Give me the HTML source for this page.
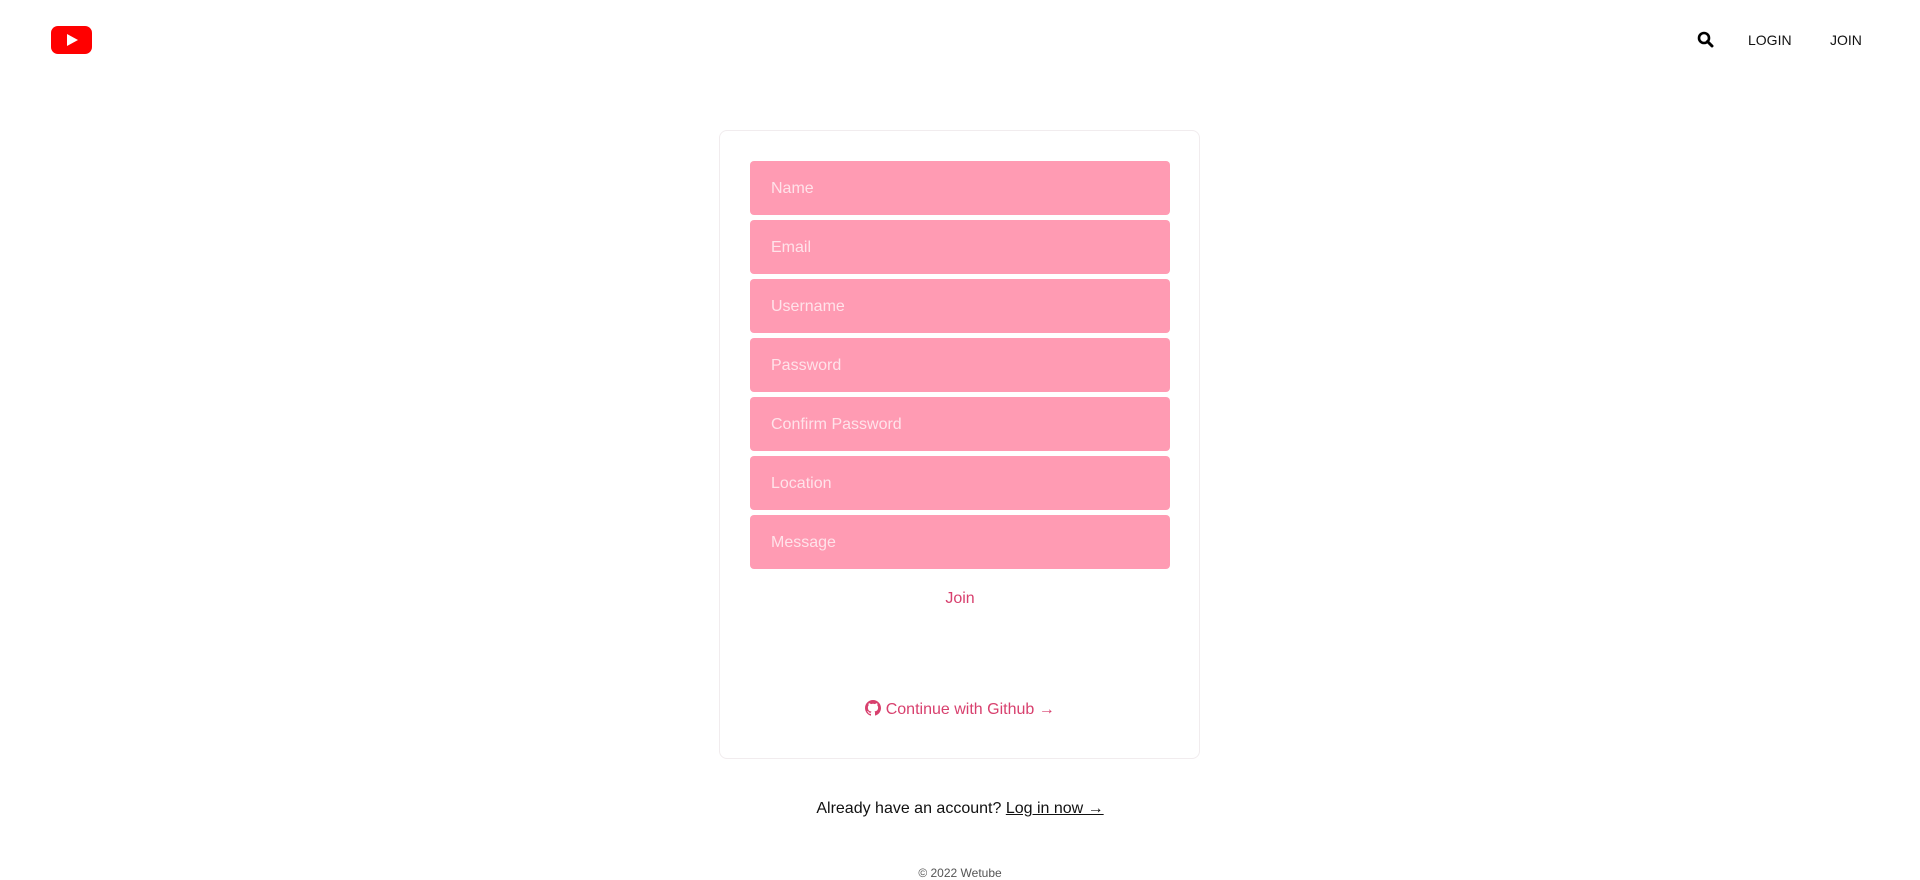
<!DOCTYPE html>
<html><head><meta charset="utf-8"><style>
*{box-sizing:border-box;margin:0;padding:0}
body{width:1920px;height:878px;background:#fff;font-family:"Liberation Sans",sans-serif;position:relative;overflow:hidden;color:#222}
.logo{position:absolute;left:51px;top:26px;width:41px;height:28px;background:#f00;border-radius:7px}
.logo:after{content:"";position:absolute;left:16px;top:8px;border-left:11px solid #fff;border-top:6px solid transparent;border-bottom:6px solid transparent}
.nav{position:absolute;top:32px;font-size:14px;color:#111}
.card{position:absolute;left:719px;top:130px;width:481px;height:629px;border:1px solid #f1ecee;border-radius:8px}
.inp{position:absolute;left:750px;width:420px;height:54px;background:#ff9bb3;border-radius:4px;color:#ffe3ea;font-size:16px;line-height:56px;padding-left:21px}
.pink{position:absolute;left:0;width:1920px;text-align:center;color:#d8406e;font-size:16px}
</style></head><body>
<div class="logo"></div>
<svg style="position:absolute;left:1697px;top:31px" width="17" height="17" viewBox="0 0 17 17"><circle cx="7" cy="7" r="5" fill="none" stroke="#000" stroke-width="2.6"/><line x1="10.5" y1="10.5" x2="15" y2="15" stroke="#000" stroke-width="3" stroke-linecap="round"/></svg>
<div class="nav" style="left:1748px">LOGIN</div>
<div class="nav" style="left:1830px">JOIN</div>
<div class="card"></div>
<div class="inp" style="top:161px">Name</div>
<div class="inp" style="top:220px">Email</div>
<div class="inp" style="top:279px">Username</div>
<div class="inp" style="top:338px">Password</div>
<div class="inp" style="top:397px">Confirm Password</div>
<div class="inp" style="top:456px">Location</div>
<div class="inp" style="top:515px">Message</div>
<div class="pink" style="top:590px">Join</div>
<div class="pink" style="top:700px"><svg width="16" height="16" viewBox="0 0 16 16" style="vertical-align:-2px"><path fill="#d8406e" d="M8 0C3.6 0 0 3.6 0 8c0 3.5 2.3 6.5 5.5 7.6.4.1.5-.2.5-.4v-1.4c-2.2.5-2.7-1-2.7-1-.4-.9-.9-1.200-.9-1.2-.7-.5.1-.5.1-.5.8.1 1.2.8 1.2.8.7 1.2 1.9.9 2.3.7.1-.5.3-.9.5-1.1-1.8-.2-3.6-.9-3.6-4 0-.9.3-1.6.8-2.1-.1-.2-.4-1 .1-2.1 0 0 .7-.2 2.2.8.6-.2 1.3-.3 2-.3s1.4.1 2 .3c1.5-1 2.2-.8 2.2-.8.4 1.1.2 1.9.1 2.1.5.6.8 1.3.8 2.1 0 3.1-1.9 3.7-3.6 3.9.3.3.5.8.5 1.5v2.2c0 .2.1.5.6.4C13.7 14.5 16 11.5 16 8c0-4.4-3.6-8-8-8z"/></svg> Continue with Github →</div>
<div style="position:absolute;left:0;width:1920px;top:800px;text-align:center;font-size:16px;color:#111">Already have an account? <span style="text-decoration:underline">Log in now →</span></div>
<div style="position:absolute;left:0;width:1920px;top:866px;text-align:center;font-size:12px;color:#555">© 2022 Wetube</div>
</body></html>
